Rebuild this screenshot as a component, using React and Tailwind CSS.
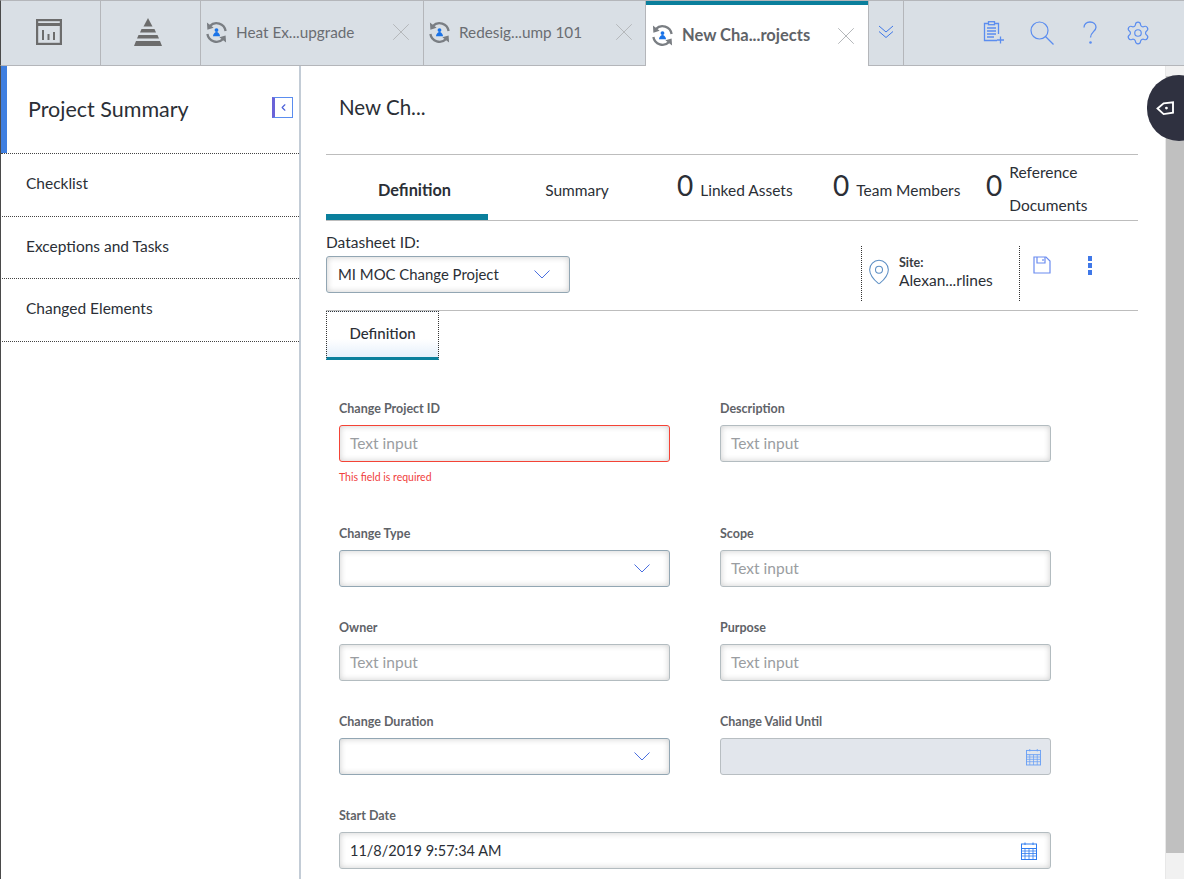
import { ChevronLeft, Settings, MapPin, X } from 'lucide-react'

const font = { fontFamily: 'Lato, "Noto Sans", sans-serif' }

function SyncIcon({ className }) {
  return (
    <svg viewBox="0 0 24 24" className={`${className} -scale-x-100`} fill="none">
      <path d="M2.500 10.500A9.700 9.700 0 0 1 19 5.300" stroke="#7a7e83" strokeWidth="2.400" />
      <path d="M21.500 13.500A9.700 9.700 0 0 1 5 18.700" stroke="#7a7e83" strokeWidth="2.400" />
      <path d="M22 1.500l-.5 7.500-6.500-2zM2 22.500l.5-7.500 6.500 2z" fill="#7a7e83" />
      <circle cx="12" cy="9.500" r="2" fill="#1a73e8" />
      <path d="M8.300 16c.3-2.800 2-4.500 3.700-4.500s3.400 1.700 3.700 4.500z" fill="#1a73e8" />
    </svg>
  )
}

function CloseTab({ className }) {
  return <X className={className} size={30} strokeWidth={0.800} color="#b5b8bb" />
}

function Tab({ label, active, width }) {
  if (active) {
    return (
      <div className="w-[222px] h-[65px] bg-white border-t-4 border-[#0a7f9c] flex items-center pl-[5px] shrink-0">
        <SyncIcon className="w-[23px] h-[23px]" />
        <span className="ml-[8px] text-[16.500px] font-bold text-[#5f6368] w-[140px] truncate">{label}</span>
        <CloseTab className="ml-[9px]" />
      </div>
    )
  }
  return (
    <div className={`${width} h-[65px] border-r border-[#b4b6ba] flex items-center pl-[4px] shrink-0 pb-[3px]`}>
      <SyncIcon className="w-[23px] h-[23px]" />
      <span className="ml-[8px] pt-[1px] text-[15.300px] text-[#6a6d72] w-[145px] truncate">{label}</span>
      <CloseTab className="ml-[5px]" />
    </div>
  )
}

function CalendarIcon({ className, color }) {
  return (
    <svg viewBox="0 0 16 18" className={className} fill="none" stroke={color} strokeWidth="1">
      <rect x="0.500" y="2" width="15" height="15.500" />
      <path d="M4 0.500v2.500M12 0.500v2.500M0.500 6.500h15" />
      <path d="M0.500 9h15M0.500 11.500h15M0.500 14h15M4 6.500v11M8 6.500v11M12 6.500v11" strokeWidth="0.800" />
    </svg>
  )
}

function SelectChevron() {
  return (
    <svg viewBox="0 0 16 9" className="w-[16px] h-[9px]" fill="none" stroke="#4a6fe0" strokeWidth="1">
      <path d="M.5.500l7.500 7.500 7.500-7.500" />
    </svg>
  )
}

function Label({ children }) {
  return <div className="h-[17px] mb-[8px] text-[12.500px] leading-[17px] font-bold text-[#5f6368]">{children}</div>
}

const boxClass = 'h-[37px] rounded-[3px] border flex items-center shadow-[inset_0_0_6px_rgba(0,0,0,0.2)]'

function TextField({ label, error }) {
  return (
    <div>
      <Label>{label}</Label>
      <div className={`${boxClass} ${error ? 'border-[#f44336]' : 'border-[#b3bcc0]'} pl-[10px] text-[15.500px] text-[#9a9da1]`}>
        Text input
      </div>
      {error && <div className="h-[31px] pt-[8px] text-[10.500px] leading-[15px] text-[#f0403c]">{error}</div>}
    </div>
  )
}

function SelectField({ label }) {
  return (
    <div>
      <Label>{label}</Label>
      <div className={`${boxClass} border-[#92a6b3] justify-end pr-[19px]`}>
        <SelectChevron />
      </div>
    </div>
  )
}

function Stat({ label, className }) {
  return (
    <div className={`${className} pl-[11px] flex items-baseline`}>
      <span className="text-[28px] leading-[34px] text-[#2b2f36]">0</span>
      <span className="ml-[7px] text-[15.500px] text-[#2b2f36]">{label}</span>
    </div>
  )
}

function NavRow({ children, height }) {
  return (
    <div className={`${height} pl-[24px] pb-[2px] ml-[1px] flex items-center border-b border-dotted border-[#444] text-[15.500px] text-[#2b2f36]`}>
      {children}
    </div>
  )
}

export default function App() {
  return (
    <div className="relative w-[1184px] h-[879px] overflow-hidden bg-white flex flex-col" style={font}>
      {/* top tab strip */}
      <div className="h-[66px] shrink-0 flex bg-[#d9dfe5] border-t border-b border-[#b4b6ba] border-l border-l-[#4a4a4a]">
        <div className="w-[100px] border-r border-[#b4b6ba] flex items-center justify-center pb-[3px] pr-[3px]">
          <svg viewBox="0 0 26 26" className="w-[26px] h-[26px]" fill="none">
            <rect x="1" y="1" width="24" height="24" stroke="#6c6c6c" strokeWidth="2.400" />
            <path d="M1 5.500h24" stroke="#6c6c6c" strokeWidth="3" />
            <path d="M7 11v10M12.500 15v6M18 13v8" stroke="#6c6c6c" strokeWidth="2" />
          </svg>
        </div>
        <div className="w-[100px] border-r border-[#b4b6ba] flex items-center justify-center pb-[3px] pr-[5px]">
          <svg viewBox="0 0 28 28" className="w-[28px] h-[28px]" fill="#6c6c6c">
            <path d="M14 0l4.500 8.500h-9z" />
            <path d="M7.500 11h13l1.500 3.500H6zM4.500 17h19l1.500 3.500H3zM2 23h24l2 5H0z" />
          </svg>
        </div>
        <Tab label="Heat Ex...upgrade" width="w-[223px]" />
        <Tab label="Redesig...ump 101" width="w-[222px]" />
        <Tab label="New Cha...rojects" active />
        <div className="w-[36px] shrink-0 border-l border-r border-[#b4b6ba] flex items-center justify-center pb-[2px]">
          <svg viewBox="0 0 16 14" className="w-[16px] h-[14px]" fill="none" stroke="#3f78e8" strokeWidth="1">
            <path d="M1 1l7 6 7-6M1 6.500l7 6 7-6" />
          </svg>
        </div>
        <div className="flex-1 flex items-center pl-[79px] pb-[1px]">
          <svg viewBox="0 0 22 23" className="w-[22px] h-[23px]" fill="none" stroke="#5b8def" strokeWidth="1.300">
            <path d="M6 2.500H1.500v17H14M15.500 13V2.500H11" />
            <rect x="5.500" y="0.700" width="6" height="3" />
            <path d="M4 7h9M4 10h9M4 13h9M4 16h7M17.500 15.500v7M14 19h7" />
          </svg>
          <svg viewBox="0 0 24 24" className="w-[24px] h-[24px] ml-[25px]" fill="none" stroke="#5b8def" strokeWidth="1.200">
            <circle cx="9.500" cy="9.500" r="8.500" />
            <path d="M15.500 15.500l8 8" />
          </svg>
          <svg viewBox="0 0 14 24" className="w-[14px] h-[24px] ml-[29px]" fill="none" stroke="#5b8def" strokeWidth="1.300">
            <path d="M1 6.500C1 3 3.500 1 7 1s6 2.200 6 5.200c0 4.300-5.500 4.800-5.500 10.300" />
            <circle cx="7.500" cy="21.500" r="1.300" fill="#5b8def" stroke="none" />
          </svg>
          <Settings size={26} strokeWidth={1.100} color="#5b8def" className="ml-[28px]" />
        </div>
      </div>

      <div className="flex-1 flex min-h-0">
        {/* left panel */}
        <div className="w-[301px] shrink-0 border-l border-[#4a4a4a] border-r-2 border-r-[#c3ccd6]">
          <div className="relative h-[88px] flex items-center pl-[27px] border-b border-dotted border-[#444]">
            <div className="absolute left-0 top-0 bottom-0 w-[6px] bg-[#3f7fe0]" />
            <span className="text-[21.500px] text-[#2b2f36]">Project Summary</span>
            <div className="absolute right-[6px] top-[31px] w-[21px] h-[21px] border border-[#5b8def] border-l-[3px] border-l-[#6a63d8] flex items-center justify-center">
              <ChevronLeft size={11} strokeWidth={2.500} color="#4a5fd8" />
            </div>
          </div>
          <NavRow height="h-[63px]">Checklist</NavRow>
          <NavRow height="h-[62px]">Exceptions and Tasks</NavRow>
          <NavRow height="h-[63px]">Changed Elements</NavRow>
        </div>

        {/* main content */}
        <div className="flex-1 pl-[25px] pr-[27px] min-w-0">
          <div className="h-[89px] flex items-center border-b border-[#bdbdbd] pl-[13px] pb-[6px] text-[20.500px] text-[#2b2f36]">
            New Ch...
          </div>

          <div className="h-[66px] flex border-b border-[#bdbdbd]">
            <div className="w-[162px] h-[65px] flex items-center justify-center border-b-[6px] border-[#0a7f9c] pl-[15px] pt-[12px] text-[16.300px] font-bold text-[#2b2f36]">
              Definition
            </div>
            <div className="w-[178px] flex items-center justify-center pt-[6px] text-[15.500px] text-[#2b2f36]">Summary</div>
            <Stat label="Linked Assets" className="w-[156px] pt-[13px]" />
            <Stat label="Team Members" className="w-[153px] pt-[13px]" />
            <div className="pl-[11px] flex">
              <span className="text-[28px] leading-[34px] text-[#2b2f36] pt-[13px]">0</span>
              <span className="ml-[7px] w-[90px] pt-[1px] text-[15.500px] leading-[33px] text-[#2b2f36]">Reference Documents</span>
            </div>
          </div>

          <div className="h-[90px] flex justify-between border-b border-[#bdbdbd]">
            <div className="pt-[12px]">
              <div className="h-[23px] text-[15.500px] leading-[18px] text-[#2b2f36]">Datasheet ID:</div>
              <div className="w-[244px] h-[37px] rounded-[3px] border border-[#92a6b3] flex items-center justify-between pl-[11px] pr-[19px] text-[14.900px] text-[#2b2f36] shadow-[inset_0_0_6px_rgba(0,0,0,0.2)]">
                MI MOC Change Project
                <SelectChevron />
              </div>
            </div>
            <div className="flex items-start pt-[25px] w-[277px]">
              <div className="w-[159px] h-[55px] border-l border-r border-dotted border-[#333] flex pl-[3px]">
                <MapPin size={28} strokeWidth={0.900} color="#5d8fc4" className="mt-[12px] shrink-0" />
                <div className="ml-[6px] pt-[9px]">
                  <div className="text-[12.500px] leading-[15px] font-bold text-[#3a3d42]">Site:</div>
                  <div className="text-[15.500px] leading-[20px] text-[#2b2f36]">Alexan...rlines</div>
                </div>
              </div>
              <svg viewBox="0 0 18 18" className="w-[18px] h-[18px] ml-[13px] mt-[10px]" fill="none" stroke="#6b8cf0" strokeWidth="1.200">
                <path d="M1 1h12l4 4v12H1z" />
                <path d="M4 1v6h8V1M10 3v2" />
              </svg>
              <div className="ml-[37px] mt-[10px] flex flex-col gap-[2px]">
                <span className="w-[4px] h-[5px] bg-[#3f78e8]" />
                <span className="w-[4px] h-[5px] bg-[#3f78e8]" />
                <span className="w-[4px] h-[5px] bg-[#3f78e8]" />
              </div>
            </div>
          </div>

          <div className="w-[113px] h-[49px] border-l border-r border-t border-dotted border-[#333] border-b-[3px] border-b-[#0a7f9c] bg-gradient-to-b from-white from-60% to-[#e6f0fb] flex items-center justify-center pb-[3px] text-[15px] font-medium text-[#2b2f36] [border-bottom-style:solid]">
            Definition
          </div>

          <div className="pt-[40px] pl-[13px] grid grid-cols-[331px_331px] gap-x-[50px] gap-y-[32px] items-start">
            <TextField label="Change Project ID" error="This field is required" />
            <TextField label="Description" />
            <SelectField label="Change Type" />
            <TextField label="Scope" />
            <TextField label="Owner" />
            <TextField label="Purpose" />
            <SelectField label="Change Duration" />
            <div>
              <Label>Change Valid Until</Label>
              <div className="h-[37px] rounded-[3px] border border-[#b8bec2] bg-[#e2e6ec] flex items-center justify-end pr-[9px]">
                <CalendarIcon className="w-[15px] h-[18px]" color="#6aa0f5" />
              </div>
            </div>
            <div className="col-span-2">
              <Label>Start Date</Label>
              <div className={`${boxClass} border-[#b3bcc0] justify-between pl-[10px] pr-[13px] text-[14.500px] text-[#2b2f36]`}>
                11/8/2019 9:57:34 AM
                <CalendarIcon className="w-[16px] h-[18px]" color="#2f7cf0" />
              </div>
            </div>
          </div>
        </div>

        {/* scrollbar */}
        <div className="w-[19px] shrink-0 bg-[#f1f1f1] border-l border-[#e8e8e8] flex flex-col pt-[10px]">
          <div className="h-[777px] bg-[#c0c0c0]" />
        </div>
      </div>

      {/* floating help tab */}
      <div className="absolute left-[1147px] top-[75px] w-[64px] h-[66px] rounded-full bg-[#2f3140] flex items-center pl-[9px]">
        <svg viewBox="0 0 20 16" className="w-[19px] h-[15px]" fill="none" stroke="#fff" strokeWidth="2">
          <path d="M1.500 8L8 2.500l10-1v11L8 14z" />
          <circle cx="11" cy="7.500" r="1.500" fill="#fff" stroke="none" />
        </svg>
      </div>
    </div>
  )
}
